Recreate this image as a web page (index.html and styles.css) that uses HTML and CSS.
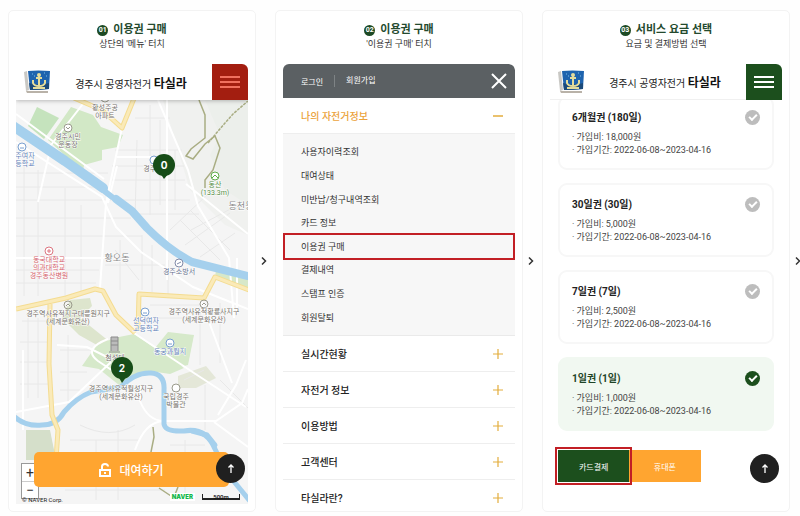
FILE: index.html
```html
<!DOCTYPE html>
<html lang="ko">
<head>
<meta charset="utf-8">
<meta name="viewport" content="width=device-width, initial-scale=1">
<title>이용권 구매 안내</title>
<link rel="stylesheet" href="styles.css">
</head>
<body>
<svg class="defs" width="0" height="0" aria-hidden="true">
  <symbol id="logo" viewBox="0 0 26 24">
    <path d="M0 2 3 1 5 20 2 21z" fill="#c9c8c4"/>
    <path d="M2 21h22v2H3z" fill="#b9b2a8"/>
    <path d="M4 1q10-1 22 0l-1 18q-10 1-19 1z" fill="#1e63ae"/>
    <path d="M5 13q10 3 20 0v6q-10 1-19 1z" fill="#1b4a7a"/>
    <path d="M15 6v10M12 8h6M9 10v3q1 3 6 3t6-3v-3M9 18h12" fill="none" stroke="#e4dc9b" stroke-width="2"/>
    <circle cx="15" cy="5" r="2" fill="#e4dc9b"/>
    <path d="M8 4h1M20 3h1M22 6h1M10 6h1" stroke="#7cc0e8"/>
  </symbol>
  <symbol id="bars" viewBox="0 0 22 12">
    <path d="M1 1h20M1 6h20M1 11h20" stroke="currentColor" stroke-width="2"/>
  </symbol>
  <symbol id="plus" viewBox="0 0 10 10">
    <path d="M0 5h10M5 0v10" stroke="currentColor" stroke-width="1.2"/>
  </symbol>
  <symbol id="up" viewBox="0 0 8 10">
    <path d="M4 9V1M1.500 3.500 4 1l2.500 2.500" fill="none" stroke="currentColor" stroke-width="1.300"/>
  </symbol>
  <symbol id="next" viewBox="0 0 6 10">
    <path d="M1 1.500 4.500 5 1 8.500" fill="none" stroke="currentColor" stroke-width="1.500"/>
  </symbol>
</svg>

<main class="steps">
  <section class="step">
    <header class="step-head">
      <h2><span class="num">01</span>이용권 구매</h2>
      <p>상단의 '메뉴' 터치</p>
    </header>
    <div class="phone">
      <div class="appbar appbar-shadow">
        <svg class="logo" role="img" aria-label="경주시"><use href="#logo"/></svg>
        <p class="brand">경주시 공영자전거 <b>타실라</b></p>
        <button class="menu-btn menu-btn-red" type="button" aria-label="메뉴"><svg><use href="#bars"/></svg></button>
      </div>
      <div class="map">
        <svg class="map-art" viewBox="16 100 232 404" preserveAspectRatio="xMidYMid slice">
          <rect x="16" y="100" width="232" height="404" fill="#f5f5f5"/>
          <path d="M163 100 190 190 225 225 248 235V100z" fill="#f0f1ef"/>
          <path d="M205 100 220 135 210 155 225 190 248 205V100z" fill="#ecefeb"/>
          <path d="m28 126 9-19 22 11-15 21z" fill="#c5e3bd"/>
          <path d="m71 107 22 8 8 12 22 8-5 12-16 3v10l-18 5-1 7-35-32z" fill="#d2e8c6"/>
          <path d="m70 300 20-2 2 8-12 12 30 24-6 7-25-14-17-17z" fill="#dde5cd"/>
          <path d="m82 366 14-20 18-8 20-4 50 34-14 6-20-3-15 8-16 6-20-16z" fill="#d6e9ca"/>
          <path d="m155 348 13-16 26 3-6 30-8 2z" fill="#d6e9ca"/>
          <path d="M178 376 206 366l10 12-20 10h-18z" fill="#e4e7d8"/>
          <path d="M26 430h24l6 30H26z" fill="#d5dfca"/>
          <path d="m215 278 33 10v-9l-32-9z" fill="#d7e8c9"/>
          <g fill="none" stroke="#e8e8e8" stroke-width="1">
            <path d="M16 173h92M16 187h88M16 200h100M16 218h115M16 236h126M16 270h83M16 283h80M24 160v136M38 170v126M65 188v108M81 205v88M22 321h28M20 342h30M20 362h30M20 384h30M28 318v80M38 318v80M60 350h32M60 372h27M60 390h20M68 335v70"/>
            <path d="M115 150h67M112 166h72M110 180h75M135 118h35M120 200h70M135 214h64M150 105v110M160 120v85M137 140l-2 80M175 150v60M142 235v55M152 245v47M168 260v35M115 250l24 30M105 265h60M120 240v50M191 230l45-24M180 220l40 40M190 210l40 40M170 230l38-36M185 245l45-32M200 257l35-24"/>
            <path d="M70 440h70M80 425q30 15 55 0M96 440v60M118 430v70M65 490h100M170 445h35M185 440v55M200 310v55M220 303v60M150 305h50M145 318h60M184 380l20-10M205 385v45M220 380l28 28M170 470h60"/>
          </g>
          <g fill="none" stroke="#fff" stroke-width="2">
            <path d="M86 100 47 150M16 142l86 55 14 30 25 25 52 35 55 22M16 114l88 65M158 100l30 70 10 36 31 52 5 60M122 128l-16 75-6 85M50 150l-12 52M16 258h90M117 157h42M117 166 108 203M167 100v180M186 184l62 50M237 258v55M200 298l32 85"/>
            <path d="m134 333 60 40 52 34M108 339q-26 10-10 22l18 12M23 350v80M16 412l53-10 42-40M140 385v16q8 20 24 20h52l26-18 6-14M246 360l-10 25-18 30M135 450q10-28 28-29M214 422l34 25M57 345l30 2 20 10"/>
          </g>
          <g fill="none" stroke="#a5d0ed" stroke-linecap="round" stroke-linejoin="round">
            <path d="m10 124 55 37 38 27" stroke-width="10"/>
            <path d="m103 190 9 7" stroke-width="6"/>
            <path d="m116 199 16 12 15 17q22 22 45 34l56 14" stroke-width="8"/>
            <path d="M10 412q12 15 32 13 15 0 22-13 12-14 27-20l30-5q14-15 30-14 14 1 13 17v34q1 8 20 7 22-4 31 18l12 24 22 27" stroke-width="5"/>
            <path d="m192 431 15 4 8 10" stroke-width="5"/>
          </g>
          <g fill="none" stroke="#f4dc91" stroke-width="5" stroke-linejoin="round">
            <path d="m74 98 28 12 20 18 13-32M16 309l50-11 29-9 8 2 13 24 19 18M138 331l1-37 65 4 11-21 34 13M50 304l-1 60 3 51 6 15-2 30"/>
          </g>
          <g fill="none" stroke="#faeab8" stroke-width="3" stroke-linejoin="round">
            <path d="m74 98 28 12 20 18 13-32M16 309l50-11 29-9 8 2 13 24 19 18M138 331l1-37 65 4 11-21 34 13M50 304l-1 60 3 51 6 15-2 30"/>
          </g>
          <g fill="none" stroke="#a9ad83" stroke-width="1.500">
            <path d="m199 100 6 15v23l-14 11-5 7 7 3 12-15 10-8 5 12-7 22-8 10v8"/>
            <path d="m208 143 17-20 8-9 15-13" stroke-dasharray="3 1"/>
            <path d="m153 427 1 10-4 20M159 488l12 8M178 487l-4 10"/>
          </g>
          <g class="poi" stroke="#9a9a8c"><circle cx="105" cy="98" r="4"/><circle cx="68" cy="128" r="4"/><path d="m66 127 2 2 2-2M66 306l2-2 2 2M202 305l2-2 2 2"/><circle cx="176" cy="388" r="4"/></g>
          <g fill="none" stroke="#9a9a8c"><circle cx="68" cy="305" r="4"/><circle cx="204" cy="304" r="4"/></g>
          <g class="poi" stroke="#7aa0d0"><circle cx="22" cy="147" r="4"/><circle cx="154" cy="160" r="4"/><circle cx="145" cy="312" r="4"/><circle cx="170" cy="343" r="4"/><path d="M20 148h4M143 313h4M168 344h4"/></g>
          <g class="poi" stroke="#8089a8"><circle cx="179" cy="263" r="4"/><path d="m177 264 4-2"/></g>
          <g class="poi" stroke="#dc7580"><circle cx="49" cy="251" r="4"/><path d="M47 251h4M49 249v4"/></g>
          <g class="poi" stroke="#5fae4a"><circle cx="215" cy="176" r="4"/><path d="m212 178 3-3 3 3"/></g>
          <path d="M111 351v-14h7v14M109 352h11M111 341h7M111 345h7" fill="#bbb" stroke="#8b8b8b"/>
          <g class="lbl">
            <text x="105" y="110">황성주공</text><text x="105" y="118">아파트</text>
            <text x="68" y="139">경주시민</text><text x="68" y="147">운동장</text>
            <text x="153" y="171">경주고</text>
            <text x="68" y="316">경주역사유적지구대릉원지구</text><text x="68" y="324">(세계문화유산)</text>
            <text x="204" y="314">경주역사유적황룡사지구</text><text x="204" y="322">(세계문화유산)</text>
            <text x="121" y="391">경주역사유적월성지구</text><text x="121" y="399">(세계문화유산)</text>
            <text x="176" y="399">국립경주</text><text x="176" y="407">박물관</text>
            <text x="115" y="360">첨성대</text>
          </g>
          <g class="lbl lbl-school">
            <text x="25" y="158">주여자</text><text x="25" y="166">등학교</text>
            <text x="146" y="323">선덕여자</text><text x="146" y="331">고등학교</text>
            <text x="170" y="354">동궁과월지</text>
          </g>
          <g class="lbl lbl-fire"><text x="179" y="274">경주소방서</text></g>
          <g class="lbl lbl-hosp"><text x="49" y="262">동국대학교</text><text x="49" y="270">의과대학교</text><text x="49" y="278">경주동산병원</text></g>
          <g class="lbl lbl-hill"><text x="215" y="187">동산</text><text x="215" y="195">(133.3m)</text></g>
          <g class="lbl lbl-area"><text x="117" y="261">황오동</text><text x="241" y="209">동천동</text></g>
          <g class="pin"><path d="m160 173 4 6 5-6z"/><circle cx="164" cy="165" r="11"/><text x="164" y="169">0</text></g>
          <g class="pin"><path d="m118 376 4 7 5-7z"/><circle cx="122" cy="368" r="11"/><text x="122" y="372">2</text></g>
        </svg>
        <div class="zoom">
          <button type="button" aria-label="확대">+</button>
          <button type="button" aria-label="축소">−</button>
        </div>
        <small class="copy">© NAVER Corp.</small>
        <div class="map-foot"><b class="naver">NAVER</b><span class="scale">500m</span></div>
        <button class="rent" type="button">
          <svg viewBox="0 0 12 14"><path d="M1 7h10v6H1zM3 7V3.500Q3 1 6 1t3 2.500M6 9v2" fill="none" stroke="currentColor" stroke-width="2"/></svg>
          대여하기
        </button>
      </div>
      <button class="top-btn" type="button" aria-label="맨 위로"><svg><use href="#up"/></svg></button>
    </div>
  </section>
  <svg class="next" aria-hidden="true"><use href="#next"/></svg>

  <section class="step">
    <header class="step-head">
      <h2><span class="num">02</span>이용권 구매</h2>
      <p>'이용권 구매' 터치</p>
    </header>
    <div class="phone">
      <div class="drawer-bar">
        <a href="#">로그인</a>
        <a href="#">회원가입</a>
        <button class="close" type="button" aria-label="닫기"><svg viewBox="0 0 16 16"><path d="m1 1 14 14M15 1 1 15" stroke="currentColor" stroke-width="2"/></svg></button>
      </div>
      <nav class="drawer">
        <button class="group group-open" type="button" aria-expanded="true">나의 자전거정보<svg viewBox="0 0 10 10"><path d="M0 5h10" stroke="currentColor" stroke-width="1.500"/></svg></button>
        <ul class="sub">
          <li><a href="#">사용자이력조회</a></li>
          <li><a href="#">대여상태</a></li>
          <li><a href="#">미반납/청구내역조회</a></li>
          <li><a href="#">카드 정보</a></li>
          <li class="marked"><a href="#">이용권 구매</a></li>
          <li><a href="#">결제내역</a></li>
          <li><a href="#">스탬프 인증</a></li>
          <li><a href="#">회원탈퇴</a></li>
        </ul>
        <button class="group" type="button">실시간현황<svg><use href="#plus"/></svg></button>
        <button class="group" type="button">자전거 정보<svg><use href="#plus"/></svg></button>
        <button class="group" type="button">이용방법<svg><use href="#plus"/></svg></button>
        <button class="group" type="button">고객센터<svg><use href="#plus"/></svg></button>
        <button class="group" type="button">타실라란?<svg><use href="#plus"/></svg></button>
      </nav>
    </div>
  </section>
  <svg class="next" aria-hidden="true"><use href="#next"/></svg>

  <section class="step">
    <header class="step-head">
      <h2><span class="num">03</span>서비스 요금 선택</h2>
      <p>요금 및 결제방법 선택</p>
    </header>
    <div class="phone">
      <div class="appbar">
        <svg class="logo" role="img" aria-label="경주시"><use href="#logo"/></svg>
        <p class="brand">경주시 공영자전거 <b>타실라</b></p>
        <button class="menu-btn" type="button" aria-label="메뉴"><svg><use href="#bars"/></svg></button>
      </div>
      <form class="plans">
        <label class="plan"><input type="radio" name="plan"><strong>6개월권 (180일)</strong><span>· 가입비: 18,000원</span><span>· 가입기간: 2022-06-08~2023-04-16</span></label>
        <label class="plan"><input type="radio" name="plan"><strong>30일권 (30일)</strong><span>· 가입비: 5,000원</span><span>· 가입기간: 2022-06-08~2023-04-16</span></label>
        <label class="plan"><input type="radio" name="plan"><strong>7일권 (7일)</strong><span>· 가입비: 2,500원</span><span>· 가입기간: 2022-06-08~2023-04-16</span></label>
        <label class="plan"><input type="radio" name="plan" checked><strong>1일권 (1일)</strong><span>· 가입비: 1,000원</span><span>· 가입기간: 2022-06-08~2023-04-16</span></label>
        <div class="pay">
          <button class="pay-card" type="button">카드결제</button>
          <button class="pay-phone" type="button">휴대폰</button>
        </div>
      </form>
      <button class="top-btn" type="button" aria-label="맨 위로"><svg><use href="#up"/></svg></button>
    </div>
  </section>
  <svg class="next" aria-hidden="true"><use href="#next"/></svg>
</main>
</body>
</html>
```
FILE: styles.css
```css
* { box-sizing: border-box; }

body {
  margin: 0;
  overflow-x: hidden;
  background: #fefefe;
  color: #333;
  font-family: Roboto, "Noto Sans CJK KR", sans-serif;
  font-size: 9px;
}

h2, p, ul { margin: 0; padding: 0; }
ul { list-style: none; }
a { color: inherit; text-decoration: none; }
button { margin: 0; padding: 0; border: 0; background: none; color: inherit; font: inherit; }
.defs { position: absolute; }

/* Three steps, each followed by an arrow; the last arrow runs off the edge */
.steps {
  display: grid;
  grid-template-columns: repeat(3, minmax(0, 1fr) 19px);
  margin: 10px -9px 4px 8px;
  align-items: stretch;
}
.next { width: 6px; height: 10px; align-self: center; justify-self: center; margin-right: 3px; color: #333; }

.step {
  display: flex;
  flex-direction: column;
  padding: 12px 7px 7px;
  border: 1px solid #f3f3f3;
  border-radius: 5px;
  background: #fff;
}
.step-head { margin-bottom: 13px; text-align: center; line-height: 14px; }
.step-head h2 {
  display: flex;
  justify-content: center;
  align-items: center;
  gap: 5px;
  color: #244a2e;
  font-size: 11px;
  font-weight: 700;
}
.step-head p { font-size: 9px; color: #333; }
.num {
  width: 11px;
  height: 11px;
  border-radius: 50%;
  background: #1d4a24;
  color: #fff;
  font-size: 7px;
  line-height: 11px;
}

.phone { position: relative; flex: none; height: 440px; overflow: hidden; border-radius: 0 6px 0 0; }

.appbar {
  position: relative;
  z-index: 1;
  display: flex;
  justify-content: space-between;
  align-items: center;
  height: 36px;
  padding-left: 8px;
  background: #fff;
  border-bottom: 1px solid #f0f0f0;
}
.appbar-shadow { border-bottom: 0; box-shadow: 0 1px 4px rgba(0, 0, 0, .25); }
.logo { width: 26px; height: 24px; }
.brand { font-size: 10px; color: #222; white-space: nowrap; }
.brand b { font-size: 12px; color: #111; }
.menu-btn {
  display: grid;
  place-items: center;
  align-self: flex-start;
  width: 36px;
  height: 36px;
  background: #1c4f1d;
  color: #fff;
}
.menu-btn svg { width: 22px; height: 12px; }
.menu-btn-red { background: #a31e10; color: #f0705f; }

.map { position: relative; height: 404px; overflow: hidden; }
.map-art { display: block; width: 100%; height: 100%; }
.poi { fill: #fff; }
.lbl { fill: #75706a; font-size: 7px; text-anchor: middle; stroke: #fff; stroke-width: 1px; paint-order: stroke; }
.lbl-school { fill: #6482b8; }
.lbl-fire { fill: #656e8c; }
.lbl-hosp { fill: #d4626d; }
.lbl-hill { fill: #548d45; }
.lbl-area { fill: #888; font-size: 9px; }
.pin { fill: #174d18; }
.pin text { fill: #fff; font-family: Inter, sans-serif; font-size: 10px; font-weight: 700; text-anchor: middle; }

.zoom {
  position: absolute;
  left: 5px;
  bottom: 5px;
  display: grid;
  width: 18px;
  border: 1px solid #999;
  background: #fff;
}
.zoom button { height: 17px; font-size: 14px; line-height: 16px; }
.zoom button + button { border-top: 1px solid #ccc; }
.copy { position: absolute; left: 6px; bottom: 0; font-size: 6px; line-height: 8px; color: #222; }
.map-foot { position: absolute; right: 8px; bottom: 3px; display: flex; align-items: center; gap: 7px; }
.naver { padding: 0 2px; background: #fff; color: #12b84c; font-family: Inter, sans-serif; font-size: 6px; font-weight: 900; line-height: 8px; }
.scale {
  width: 38px;
  height: 6px;
  border: solid #222;
  border-width: 0 1px 2px;
  color: #111;
  font-size: 6px;
  font-weight: 600;
  line-height: 5px;
  text-align: center;
}
.rent {
  position: absolute;
  inset: auto 19px 17px 18px;
  display: flex;
  justify-content: center;
  align-items: center;
  gap: 8px;
  height: 35px;
  border-radius: 5px;
  background: #ffa530;
  color: #fff;
  font-size: 12px;
  font-weight: 500;
}
.rent svg { width: 12px; height: 14px; }

.top-btn {
  position: absolute;
  right: 3px;
  bottom: 21px;
  z-index: 2;
  display: grid;
  place-items: center;
  width: 29px;
  height: 29px;
  border-radius: 50%;
  background: #202020;
  color: #fff;
}
.top-btn svg { width: 8px; height: 10px; }

.drawer-bar {
  display: flex;
  align-items: center;
  height: 34px;
  padding: 0 8px 0 18px;
  border-radius: 6px 6px 0 0;
  background: #5b6063;
  color: #fff;
  font-size: 8px;
}
.drawer-bar a + a { margin-left: 11px; padding-left: 11px; border-left: 1px solid #7e8385; line-height: 12px; }
.close { margin-left: auto; height: 16px; }
.close svg { display: block; width: 16px; height: 16px; }

.group {
  display: flex;
  justify-content: space-between;
  align-items: center;
  width: 100%;
  height: 36px;
  padding: 0 12px 0 18px;
  border-bottom: 1px solid #eee;
  color: #222;
  font-size: 10px;
  font-weight: 500;
}
.group svg { width: 10px; height: 10px; color: #e3ad3c; }
.group-open { color: #eba33c; }
.sub {
  display: grid;
  grid-auto-rows: 1fr;
  height: 202px;
  padding: 6px 0;
  border-bottom: 1px solid #eaeaea;
  background: #f7f7f7;
  color: #333;
  font-size: 9px;
}
.sub li { display: flex; align-items: center; padding-left: 18px; }
.marked { outline: 2px solid #c21f25; outline-offset: 0; }
.sub .marked { margin: 0 2px; padding-left: 16px; }

.plans { display: grid; gap: 13px; margin-top: -4px; padding: 0 8px; }
.plan {
  position: relative;
  display: flex;
  flex-direction: column;
  padding: 12px 12px 11px;
  border: 2px solid #f7f7f7;
  border-radius: 9px;
  line-height: 13px;
  color: #444;
}
.plan strong { margin-bottom: 5px; font-size: 10px; line-height: 16px; color: #222; }
.plan input {
  appearance: none;
  position: absolute;
  top: 12px;
  right: 12px;
  display: grid;
  place-items: center;
  width: 15px;
  height: 15px;
  margin: 0;
  border-radius: 50%;
  background: #bdbdbd;
}
.plan input::after {
  content: "";
  box-sizing: border-box;
  width: 8px;
  height: 5px;
  margin-bottom: 2px;
  border: solid #fff;
  border-width: 0 0 2px 2px;
  transform: rotate(-45deg);
}
.plan input:checked { background: #1c4f1d; }
.plan:has(:checked) { border-color: #f1f8f1; background: #f1f8f1; }
.plan:has(:checked) strong { color: #1f4527; }

.pay { display: grid; grid-template-columns: 1fr 1fr; width: 66%; margin-top: 6px; }
.pay button { height: 32px; color: #fff; font-size: 8px; }
.pay-card { background: #1c4f1d; outline: 2px solid #c21f25; outline-offset: 1px; }
.pay .pay-card { position: relative; }
.pay-phone { background: #ffa530; }
```
